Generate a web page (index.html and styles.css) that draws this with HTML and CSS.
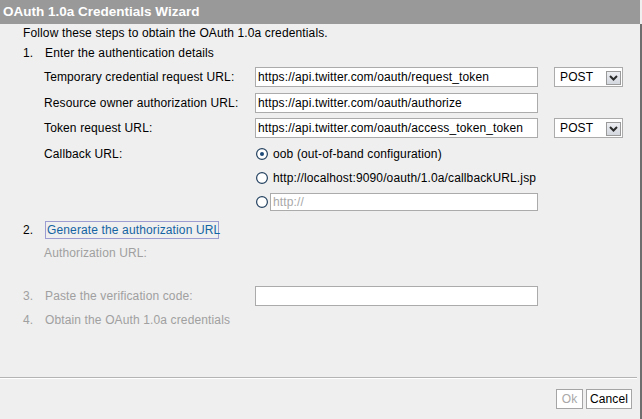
FILE: index.html
```html
<!DOCTYPE html>
<html>
<head>
<meta charset="utf-8">
<title>OAuth 1.0a Credentials Wizard</title>
<link rel="stylesheet" href="styles.css">
</head>
<body>
<div class="window">
  <div class="titlebar">OAuth 1.0a Credentials Wizard</div>
  <div class="body">
    <div class="content">
      <p class="intro">Follow these steps to obtain the OAuth 1.0a credentials.</p>
      <div class="step step1"><span class="num">1.</span><span>Enter the authentication details</span></div>
      <div class="form">
        <div class="row r1">
          <span class="label">Temporary credential request URL:</span>
          <div class="field">https://api.twitter.com/oauth/request_token</div>
          <div class="select"><span>POST</span><span class="arrow"><svg width="15" height="14" viewBox="0 0 15 14"><path d="M4 5 L7.5 8.5 L11 5" fill="none" stroke="#2b2b2b" stroke-width="2"/></svg></span></div>
        </div>
        <div class="row r2">
          <span class="label">Resource owner authorization URL:</span>
          <div class="field">https://api.twitter.com/oauth/authorize</div>
        </div>
        <div class="row r3">
          <span class="label">Token request URL:</span>
          <div class="field">https://api.twitter.com/oauth/access_token_token</div>
          <div class="select"><span>POST</span><span class="arrow"><svg width="15" height="14" viewBox="0 0 15 14"><path d="M4 5 L7.5 8.5 L11 5" fill="none" stroke="#2b2b2b" stroke-width="2"/></svg></span></div>
        </div>
        <div class="row r4">
          <span class="label">Callback URL:</span>
          <span class="radio"><svg width="12" height="12" viewBox="0 0 12 12"><circle cx="6" cy="6" r="5.4" fill="#fff" stroke="#23415f" stroke-width="1.2"/><circle cx="6" cy="6" r="2" fill="#1d4a78"/></svg></span>
          <span class="rtext">oob (out-of-band configuration)</span>
        </div>
        <div class="row r5">
          <span class="label"></span>
          <span class="radio"><svg width="12" height="12" viewBox="0 0 12 12"><circle cx="6" cy="6" r="5.4" fill="#fff" stroke="#23415f" stroke-width="1.2"/></svg></span>
          <span class="rtext">http://localhost:9090/oauth/1.0a/callbackURL.jsp</span>
        </div>
        <div class="row r6">
          <span class="label"></span>
          <span class="radio"><svg width="12" height="12" viewBox="0 0 12 12"><circle cx="6" cy="6" r="5.4" fill="#fff" stroke="#23415f" stroke-width="1.2"/></svg></span>
          <div class="field small placeholder">http://</div>
        </div>
      </div>
      <div class="step step2"><span class="num">2.</span><span class="genbtn">Generate the authorization URL</span></div>
      <div class="authurl disabled">Authorization URL:</div>
      <div class="step step3 disabled"><span class="num">3.</span><span class="label3">Paste the verification code:</span><div class="field"></div></div>
      <div class="step step4 disabled"><span class="num">4.</span><span>Obtain the OAuth 1.0a credentials</span></div>
    </div>
    <div class="footer">
      <span class="btn ok">Ok</span>
      <span class="btn cancel">Cancel</span>
    </div>
  </div>
</div>
</body>
</html>
```
FILE: styles.css
```css
html, body {
  margin: 0;
  padding: 0;
}
body {
  background: #efefef;
  font-family: "Liberation Sans", Arial, sans-serif;
  font-size: 12px;
  letter-spacing: 0.13px;
  color: #000;
}
.window {
  width: 642px;
  height: 419px;
  display: flex;
  flex-direction: column;
}
.titlebar {
  width: 637px;
  height: 24px;
  background: #999999;
  color: #fff;
  font-weight: bold;
  font-size: 13.5px;
  letter-spacing: 0;
  line-height: 24px;
  padding-left: 3px;
  box-sizing: content-box;
}
.body {
  flex: 1;
  width: 640px;
  display: flex;
  flex-direction: column;
  border-right: 2px solid #6e6e6e;
}
.content {
  flex: 1;
  padding: 2px 0 0 23px;
}
.intro {
  margin: 0;
  line-height: 14px;
}
.step {
  display: flex;
  align-items: center;
  line-height: 14px;
}
.num {
  width: 22px;
  flex: none;
}
.step1 {
  margin-top: 6px;
}
.form {
  padding-left: 21px;
  margin-top: 7px;
}
.row {
  display: flex;
  align-items: center;
  height: 20px;
}
.r2 { margin-top: 6px; }
.r3 { margin-top: 5px; }
.r4 { margin-top: 6px; }
.r5 { margin-top: 4px; }
.r6 { margin-top: 4px; }
.label {
  width: 211px;
  flex: none;
}
.field {
  width: 283px;
  height: 20px;
  box-sizing: border-box;
  border: 1px solid #ababab;
  background: #fff;
  padding: 0 2px;
  line-height: 18px;
  white-space: nowrap;
  overflow: hidden;
  flex: none;
}
.field.small {
  width: 268px;
  height: 18px;
  line-height: 16px;
  margin-left: 2px;
}
.placeholder {
  color: #a8a8a8;
}
.select {
  margin-left: 16px;
  width: 69px;
  height: 20px;
  box-sizing: border-box;
  border: 1px solid #ababab;
  background: #fff;
  display: flex;
  align-items: center;
  justify-content: space-between;
  padding: 0 1px 0 5px;
  line-height: 18px;
}
.arrow {
  width: 15px;
  height: 14px;
  box-sizing: border-box;
  border: 1px solid #9a9a9a;
  background: linear-gradient(#eceef2, #d3d7de);
  display: flex;
  align-items: center;
  justify-content: center;
  margin-top: 1px;
}
.arrow svg {
  display: block;
  flex: none;
}
.radio {
  width: 12px;
  height: 12px;
  margin-left: 1px;
  flex: none;
}
.radio svg {
  display: block;
}
.rtext {
  margin-left: 5px;
  white-space: nowrap;
}
.step2 {
  margin-top: 9px;
  height: 18px;
}
.genbtn {
  display: block;
  height: 18px;
  box-sizing: border-box;
  width: 174px;
  border: 1px solid #9d9dd2;
  padding: 0 1px;
  line-height: 16px;
  color: #1464a2;
  white-space: nowrap;
}
.disabled {
  color: #a0a0a0;
}
.authurl {
  margin-top: 7px;
  padding-left: 21px;
  line-height: 14px;
}
.step3 {
  margin-top: 26px;
  height: 20px;
}
.label3 {
  width: 210px;
  flex: none;
}
.step4 {
  margin-top: 7px;
}
.footer {
  height: 42px;
  box-sizing: border-box;
  margin-right: 3px;
  border-top: 1px solid #b4b4b4;
  box-shadow: inset 0 1px 0 #ffffff;
  display: flex;
  justify-content: flex-end;
  align-items: flex-start;
  padding: 11px 5px 0 0;
  gap: 3px;
}
.btn {
  height: 20px;
  box-sizing: border-box;
  border: 1px solid #a5a5a5;
  background: #fff;
  line-height: 18px;
  text-align: center;
}
.ok {
  width: 27px;
  color: #a8a8a8;
}
.cancel {
  width: 46px;
}
```
